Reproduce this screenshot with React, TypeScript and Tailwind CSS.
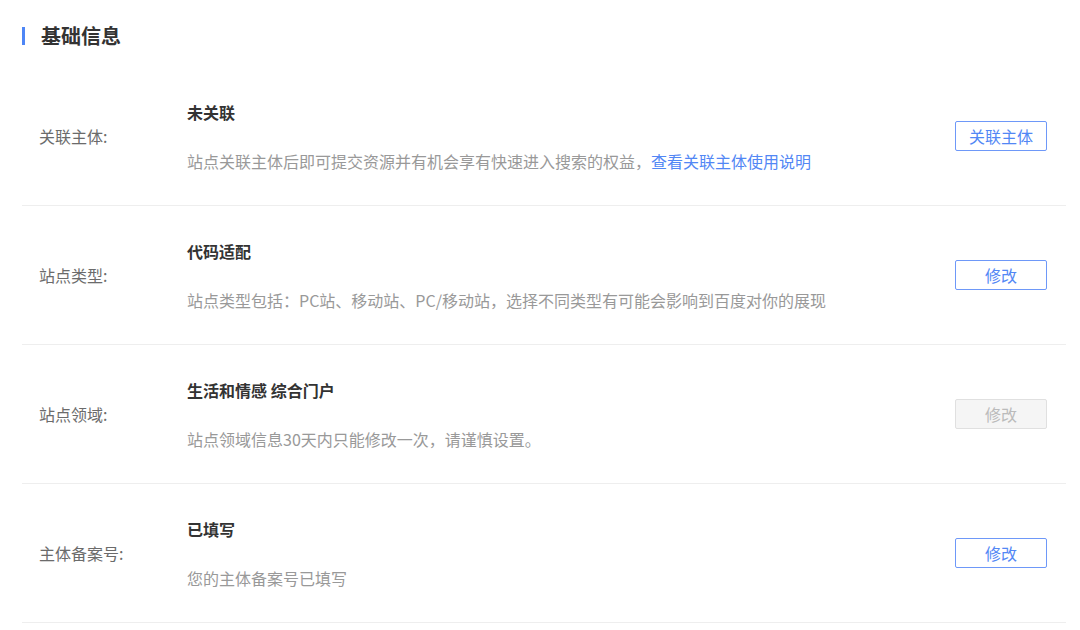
import React from "react";

interface Row {
  label: string;
  title: string;
  desc: string;
  link?: string;
  action: string;
  disabled?: boolean;
}

const ROWS: Row[] = [
  {
    label: "关联主体:",
    title: "未关联",
    desc: "站点关联主体后即可提交资源并有机会享有快速进入搜索的权益，",
    link: "查看关联主体使用说明",
    action: "关联主体",
  },
  {
    label: "站点类型:",
    title: "代码适配",
    desc: "站点类型包括：PC站、移动站、PC/移动站，选择不同类型有可能会影响到百度对你的展现",
    action: "修改",
  },
  {
    label: "站点领域:",
    title: "生活和情感 综合门户",
    desc: "站点领域信息30天内只能修改一次，请谨慎设置。",
    action: "修改",
    disabled: true,
  },
  {
    label: "主体备案号:",
    title: "已填写",
    desc: "您的主体备案号已填写",
    action: "修改",
  },
];

export default function App() {
  return (
    <div
      className="min-h-screen w-[1080px] bg-white"
      style={{ fontFamily: '"Noto Sans CJK SC", "Noto Sans", sans-serif' }}
    >
      <div className="flex items-center pl-[22px] pt-[26px]">
        <span className="h-[18px] w-[3px] bg-[#4e86f6]" />
        <h1 className="ml-4 text-[20px] font-bold leading-[20px] text-[#333]">基础信息</h1>
      </div>
      <div className="ml-[22px] mr-[14px] mt-[21px]">
        {ROWS.map((r) => (
          <div
            key={r.label}
            className="flex h-[139px] items-center border-b border-[#eeeeee] pl-[17px] pr-[19px]"
          >
            <div className="w-[148px] text-[16px] text-[#6b6b6b]">{r.label}</div>
            <div className="flex flex-1 flex-col gap-[27px]">
              <div className="text-[16px] font-bold leading-[22px] text-[#333]">{r.title}</div>
              <div className="text-[16px] leading-[22px] text-[#999]">
                {r.desc}
                {r.link && <a className="text-[#5287f5]">{r.link}</a>}
              </div>
            </div>
            <button
              className={`h-[30px] w-[92px] rounded-[2px] border text-[16px] ${
                r.disabled
                  ? "border-[#e0e0e0] bg-[#f5f5f5] text-[#bbb]"
                  : "border-[#6e98f8] bg-white text-[#5287f5]"
              }`}
            >
              {r.action}
            </button>
          </div>
        ))}
      </div>
    </div>
  );
}
